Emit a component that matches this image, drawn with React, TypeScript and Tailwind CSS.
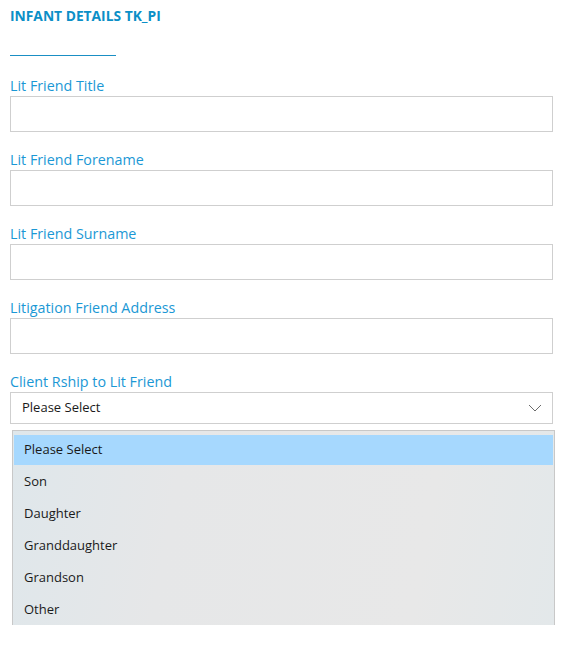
const fields = [
  "Lit Friend Title",
  "Lit Friend Forename",
  "Lit Friend Surname",
  "Litigation Friend Address",
];

const options = [
  "Please Select",
  "Son",
  "Daughter",
  "Granddaughter",
  "Grandson",
  "Other",
];

export default function App() {
  return (
    <div className="w-[572px] h-[645px] bg-white font-['Open_Sans',sans-serif] overflow-hidden">
      <div className="pl-[10px] pr-[19px] pt-[7px]">
        {/* Header */}
        <h1 className="text-[13.8px] font-bold text-[#0b8fc7] leading-[18px]">
          INFANT DETAILS TK_PI
        </h1>
        <div className="mt-[30px] w-[106px] h-px bg-[#1a8fc4]" />

        {/* Text fields */}
        <div className="mt-[20px] flex flex-col">
          {fields.map((label) => (
            <div key={label} className="flex flex-col mb-[18px]">
              <label className="text-[14.3px] leading-[20px] text-[#1b98d5]">
                {label}
              </label>
              <div className="h-[36px] border border-[#cfcfcf] bg-white" />
            </div>
          ))}

          {/* Select */}
          <div className="flex flex-col">
            <label className="text-[14.3px] leading-[20px] text-[#1b98d5]">
              Client Rship to Lit Friend
            </label>
            <div className="h-[32px] border border-[#cfcfcf] bg-white flex items-center justify-between pl-[11px] pr-[10px]">
              <span className="text-[13px] text-[#1a1a1a]">Please Select</span>
              <svg width="14" height="8" viewBox="0 0 14 8" fill="none">
                <path d="M1 1l6 6 6-6" stroke="#6b6b6b" strokeWidth="1" />
              </svg>
            </div>
          </div>
        </div>
      </div>

      {/* Open dropdown list */}
      <div className="ml-[12px] mt-[6px] w-[543px] h-[195px] border-x border-t border-[#c8c8c8] bg-[linear-gradient(100deg,#dfe7eb_0%,#e6e7e8_30%,#e8e8e8_75%,#e3e8ea_100%)] pt-[4px] px-[1px]">
        {options.map((opt, i) => (
          <div
            key={opt}
            className={`flex items-center pl-[10px] text-[13px] text-[#1a1a1a] ${
              i === 0 ? "h-[30px] bg-[#a6d8fe] mb-[1px]" : "h-[32px]"
            }`}
          >
            {opt}
          </div>
        ))}
      </div>
    </div>
  );
}
